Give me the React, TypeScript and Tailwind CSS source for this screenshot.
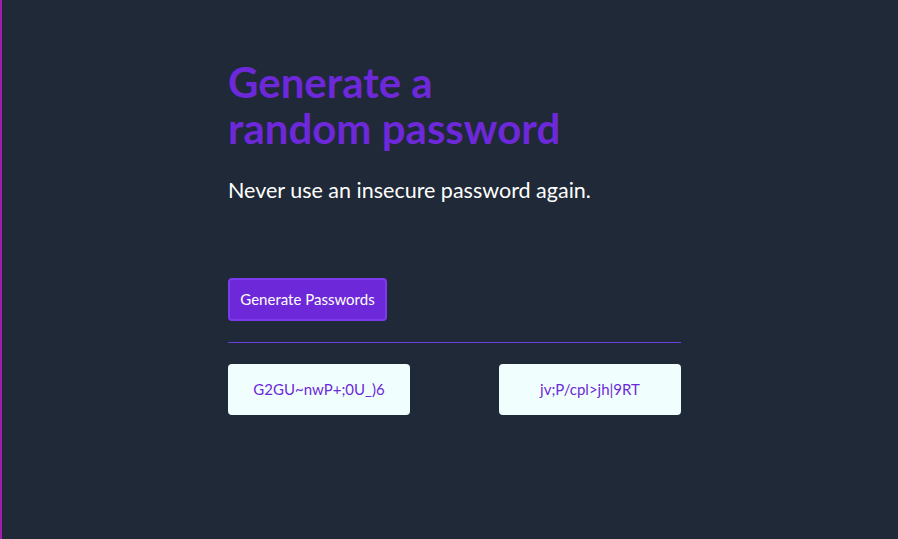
export default function App() {
  return (
    <div className="min-h-[539px] w-full bg-[#1f2937] border-l-2 border-[#a21caf]" style={{ fontFamily: "Lato, 'Open Sans', sans-serif" }}>
      <div className="ml-[226px] w-[453px] pt-[59px]">
        <h1 className="text-[42px] leading-[46px] font-bold text-[#6d28d9]">
          Generate a<br />random password
        </h1>
        <p className="mt-[25px] text-[21.5px] leading-[28px] text-white">Never use an insecure password again.</p>
        <button className="mt-[74px] h-[43px] w-[159px] rounded-[4px] border-2 border-[#7c3aed] bg-[#6d28d9] text-[15px] text-white">
          Generate Passwords
        </button>
        <div className="mt-[21px] border-t border-[#6d3ee0]" />
        <div className="mt-[21px] flex justify-between">
          <div className="flex h-[51px] w-[182px] items-center justify-center rounded-[4px] bg-[#f0fffe] text-[15px] text-[#6d28d9]">
            G2GU~nwP+;0U_)6
          </div>
          <div className="flex h-[51px] w-[182px] items-center justify-center rounded-[4px] bg-[#f0fffe] text-[15px] text-[#6d28d9]">
            jv;P/cpl&gt;jh|9RT
          </div>
        </div>
      </div>
    </div>
  );
}
